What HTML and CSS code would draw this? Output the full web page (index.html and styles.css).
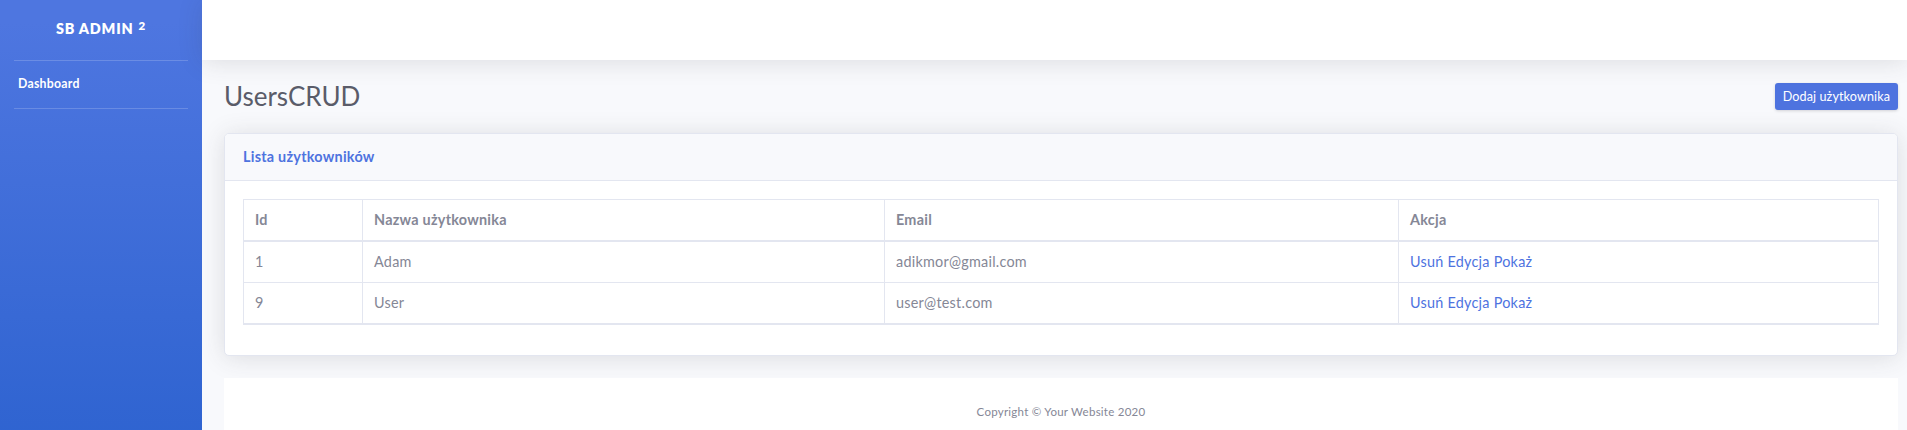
FILE: index.html
```html
<!DOCTYPE html>
<html lang="pl">
<head>
<meta charset="utf-8">
<title>UsersCRUD</title>
<link rel="stylesheet" href="styles.css">
</head>
<body>
<div class="wrapper">
  <aside class="sidebar">
    <div class="brand">SB Admin <sup>2</sup></div>
    <hr class="divider">
    <a class="nav-link" href="#">Dashboard</a>
    <hr class="divider">
  </aside>
  <div class="content-wrapper">
    <nav class="topbar"></nav>
    <main class="container">
      <div class="page-heading">
        <h1 class="title">UsersCRUD</h1>
        <a class="btn" href="#">Dodaj użytkownika</a>
      </div>
      <section class="card">
        <div class="card-header">Lista użytkowników</div>
        <div class="card-body">
          <table class="table">
            <colgroup>
              <col class="c-id"><col class="c-name"><col class="c-email"><col class="c-act">
            </colgroup>
            <thead>
              <tr><th>Id</th><th>Nazwa użytkownika</th><th>Email</th><th>Akcja</th></tr>
            </thead>
            <tbody>
              <tr><td>1</td><td>Adam</td><td>adikmor@gmail.com</td><td><a href="#">Usuń</a> <a href="#">Edycja</a> <a href="#">Pokaż</a></td></tr>
              <tr><td>9</td><td>User</td><td>user@test.com</td><td><a href="#">Usuń</a> <a href="#">Edycja</a> <a href="#">Pokaż</a></td></tr>
            </tbody>
          </table>
        </div>
      </section>
      <footer class="footer">
        <span>Copyright © Your Website 2020</span>
      </footer>
    </main>
  </div>
</div>
</body>
</html>
```
FILE: styles.css
```css
* { box-sizing: border-box; }
html, body { margin: 0; padding: 0; height: 100%; }
body {
  font-family: "Lato", "Open Sans", sans-serif;
  font-size: 14.4px;
  line-height: 1.5;
  letter-spacing: 0.25px;
  color: #858796;
  background: #f8f9fc;
  overflow: hidden;
}
a { color: #4e73df; text-decoration: none; }

.wrapper { display: flex; min-height: 100vh; }

.sidebar {
  width: 202px;
  flex: 0 0 202px;
  min-height: 100vh;
  background: linear-gradient(180deg, #4e76e0 5%, #2e63d0 100%);
  display: flex;
  flex-direction: column;
}
.brand {
  height: 60px;
  display: flex;
  align-items: center;
  justify-content: center;
  color: #fff;
  font-weight: 800;
  font-size: 14.4px;
  text-transform: uppercase;
  letter-spacing: 0.8px;
  padding-bottom: 2px;
}
.brand sup { font-size: 11.5px; margin-left: 5px; position: relative; top: -3px; }
.divider {
  margin: 0 14px;
  border: 0;
  border-top: 1px solid rgba(255,255,255,0.18);
  height: 0;
}
.nav-link {
  display: block;
  color: #fff;
  font-weight: 700;
  font-size: 12.3px;
  padding: 14px 18px 15px;
  line-height: 18px;
}

.content-wrapper { flex: 1; display: flex; flex-direction: column; background: #f8f9fc; }
.topbar {
  height: 60px;
  background: #fff;
  box-shadow: 0 2px 25px 0 rgba(58,59,69,0.15);
  position: relative;
  z-index: 1;
}
.container { padding: 21px 9px 0 22px; }

.page-heading {
  display: flex;
  align-items: center;
  justify-content: space-between;
  margin-bottom: 22px;
}
.title {
  margin: 0;
  font-size: 26px;
  font-weight: 400;
  line-height: 30px;
  letter-spacing: 0;
  color: #5a5c69;
}
.btn {
  display: inline-block;
  background: #4e73df;
  color: #fff;
  font-size: 12.6px;
  line-height: 19px;
  letter-spacing: 0.1px;
  padding: 4px 8px;
  border-radius: 3px;
  box-shadow: 0 1px 3px rgba(58,59,69,0.2);
}

.card {
  background: #fff;
  border: 1px solid #e3e6f0;
  border-radius: 5px;
  box-shadow: 0 2px 25px 0 rgba(58,59,69,0.15);
  margin-bottom: 22px;
  overflow: hidden;
}
.card-header {
  background: #f8f9fc;
  border-bottom: 1px solid #e3e6f0;
  padding: 12px 18px;
  line-height: 22px;
  font-weight: 700;
  color: #4e73df;
  font-size: 14.4px;
}
.card-body { padding: 18px 18px 17px; }

.table {
  width: 100%;
  border-collapse: collapse;
  margin-bottom: 13px;
  color: #858796;
}
.c-id { width: 119px; }
.c-name { width: 522px; }
.c-email { width: 514px; }
.c-act { width: auto; }
.table th, .table td {
  border: 1px solid #e3e6f0;
  padding: 10px 11px;
  line-height: 20px;
  text-align: left;
  vertical-align: top;
}
.table th { font-weight: 700; border-bottom-width: 2px; }
.table tbody tr:last-child td { border-bottom-width: 2px; }

.footer {
  background: #fff;
  text-align: center;
  font-size: 11.5px;
  padding: 25px 0 30px;
  color: #858796;
}
```
